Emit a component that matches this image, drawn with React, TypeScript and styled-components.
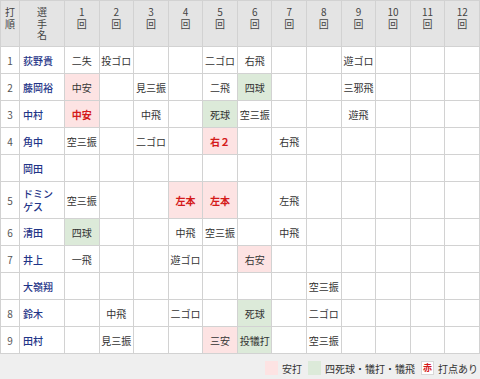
import React from "react";
import styled, { createGlobalStyle } from "styled-components";

const Global = createGlobalStyle`
  html, body { margin: 0; padding: 0; background: #efefef; }
  body { font-family: "Noto Sans CJK JP", "Noto Sans", sans-serif; color: #333; }
`;

const Wrap = styled.div`
  width: 480px;
  height: 379px;
  background: #efefef;
  overflow: hidden;
`;

const Table = styled.table`
  width: 480px;
  border-collapse: collapse;
  table-layout: fixed;
  background: #fff;
  font-size: 10px;
`;

const Th = styled.th`
  background: #e4e4e4;
  border: 1px solid #d2d2d2;
  font-weight: normal;
  font-size: 10px;
  color: #444;
  vertical-align: top;
  padding: 5px 0 0;
  height: 40px;
  line-height: 11.5px;
  text-align: center;
`;

const HeadLine = styled.span`
  display: block;
  height: 11.5px;
`;

const Td = styled.td<{ $tone?: "hit" | "walk"; $tall?: boolean }>`
  border: 1px solid #d2d2d2;
  height: ${(p) => (p.$tall ? "36px" : "26px")};
  padding: 0;
  text-align: center;
  vertical-align: middle;
  line-height: 13px;
  color: #333;
  background: ${(p) =>
    p.$tone === "hit" ? "#fde3e3" : p.$tone === "walk" ? "#dcead9" : "#fff"};
`;

const OrderCell = styled(Td)`
  color: #555;
`;

const NameCell = styled(Td)`
  text-align: left;
  padding: 0 4px 0 3px;
  color: #1f3588;
  font-weight: 500;
`;

const Red = styled.span`
  color: #d41a1a;
  font-weight: bold;
`;

const Legend = styled.div`
  display: flex;
  justify-content: flex-end;
  align-items: center;
  height: 28px;
  padding-right: 2px;
  font-size: 10px;
  color: #333;
`;

const LegendItem = styled.div`
  display: flex;
  align-items: center;
  margin-left: 6px;
`;

const Swatch = styled.span<{ $color: string; $bordered?: boolean }>`
  display: inline-block;
  width: 13px;
  height: 14px;
  background: ${(p) => p.$color};
  border: 1px solid ${(p) => (p.$bordered ? "#d8d8d8" : p.$color)};
  margin-right: 4px;
  box-sizing: border-box;
  font-size: 9px;
  line-height: 12px;
  text-align: center;
  color: #d41a1a;
  font-weight: bold;
`;

type Cell = { t: string; tone?: "hit" | "walk"; red?: boolean } | null;

const c = (t: string, tone?: "hit" | "walk", red?: boolean): Cell => ({ t, tone, red });

type Row = { order: string; name: string; tall?: boolean; cells: Record<number, Cell> };

const rows: Row[] = [
  { order: "1", name: "荻野貴", cells: { 1: c("二失"), 2: c("投ゴロ"), 5: c("二ゴロ"), 6: c("右飛"), 9: c("遊ゴロ") } },
  { order: "2", name: "藤岡裕", cells: { 1: c("中安", "hit"), 3: c("見三振"), 5: c("二飛"), 6: c("四球", "walk"), 9: c("三邪飛") } },
  { order: "3", name: "中村", cells: { 1: c("中安", "hit", true), 3: c("中飛"), 5: c("死球", "walk"), 6: c("空三振"), 9: c("遊飛") } },
  { order: "4", name: "角中", cells: { 1: c("空三振"), 3: c("二ゴロ"), 5: c("右２", "hit", true), 7: c("右飛") } },
  { order: "", name: "岡田", cells: {} },
  { order: "5", name: "ドミンゲス", tall: true, cells: { 1: c("空三振"), 4: c("左本", "hit", true), 5: c("左本", "hit", true), 7: c("左飛") } },
  { order: "6", name: "清田", cells: { 1: c("四球", "walk"), 4: c("中飛"), 5: c("空三振"), 7: c("中飛") } },
  { order: "7", name: "井上", cells: { 1: c("一飛"), 4: c("遊ゴロ"), 6: c("右安", "hit") } },
  { order: "", name: "大嶺翔", cells: { 8: c("空三振") } },
  { order: "8", name: "鈴木", cells: { 2: c("中飛"), 4: c("二ゴロ"), 6: c("死球", "walk"), 8: c("二ゴロ") } },
  { order: "9", name: "田村", cells: { 2: c("見三振"), 5: c("三安", "hit"), 6: c("投犠打", "walk"), 8: c("空三振") } },
];

const innings = Array.from({ length: 12 }, (_, i) => i + 1);

const Head = ({ lines }: { lines: string[] }) => (
  <Th>
    {lines.map((l, i) => (
      <HeadLine key={i}>{l}</HeadLine>
    ))}
  </Th>
);

export default function App() {
  return (
    <Wrap>
      <Global />
      <Table>
        <colgroup>
          <col style={{ width: 19 }} />
          <col style={{ width: 45 }} />
          {innings.map((i) => (
            <col key={i} />
          ))}
        </colgroup>
        <thead>
          <tr>
            <Head lines={["打", "順"]} />
            <Head lines={["選", "手", "名"]} />
            {innings.map((i) => (
              <Head key={i} lines={[String(i), "回"]} />
            ))}
          </tr>
        </thead>
        <tbody>
          {rows.map((r, ri) => (
            <tr key={ri}>
              <OrderCell $tall={r.tall}>{r.order}</OrderCell>
              <NameCell $tall={r.tall}>{r.name}</NameCell>
              {innings.map((i) => {
                const cell = r.cells[i];
                return (
                  <Td key={i} $tall={r.tall} $tone={cell?.tone}>
                    {cell ? cell.red ? <Red>{cell.t}</Red> : cell.t : null}
                  </Td>
                );
              })}
            </tr>
          ))}
        </tbody>
      </Table>
      <Legend>
        <LegendItem>
          <Swatch $color="#fde3e3" />
          安打
        </LegendItem>
        <LegendItem>
          <Swatch $color="#dcead9" />
          四死球・犠打・犠飛
        </LegendItem>
        <LegendItem>
          <Swatch $color="#fff" $bordered>赤</Swatch>
          打点あり
        </LegendItem>
      </Legend>
    </Wrap>
  );
}
